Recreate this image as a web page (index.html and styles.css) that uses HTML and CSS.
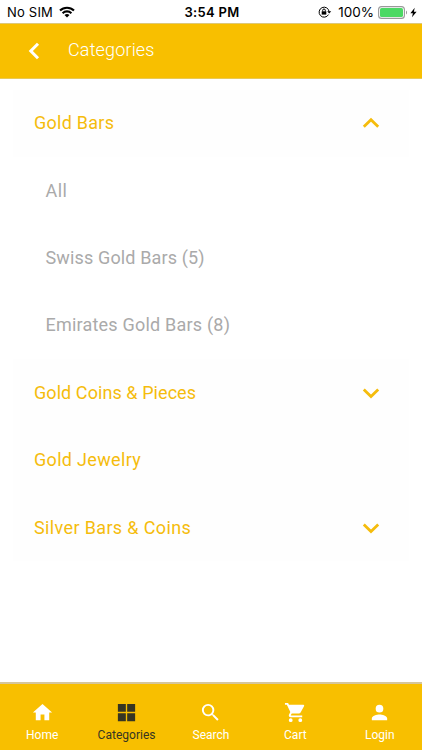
FILE: index.html
```html
<!DOCTYPE html>
<html lang="en">
<head>
<meta charset="utf-8">
<title>Categories</title>
<link rel="stylesheet" href="styles.css">
</head>
<body>
<div class="screen">
  <div class="status">
    <div class="status-left">
      <span class="carrier">No SIM</span>
      <svg class="wifi" width="16" height="12" viewBox="0 0 16 12" fill="none" stroke="#000" stroke-width="2.1"><path d="M1 4.6a10 10 0 0 1 14 0M3.6 7.2a6.3 6.3 0 0 1 8.8 0"/><path d="M8 11.6 5.5 9.1a3.6 3.6 0 0 1 5 0z" fill="#000" stroke="none"/></svg>
    </div>
    <span class="time">3:54 PM</span>
    <div class="status-right">
      <svg class="lock" width="14" height="12" viewBox="0 0 14 12" fill="none" stroke="#000" stroke-width="1"><path d="M10.5 8.6a5 5 0 1 1 .6-2.9"/><path d="M9.2 5.2h4L11.2 7.6z" fill="#000" stroke="none"/><path d="M3.7 5.3h4.6v3.3H3.7z" fill="#000" stroke="none"/><path d="M4.7 5.5V4.3a1.3 1.3 0 0 1 2.6 0v1.2"/></svg>
      <span class="percent">100%</span>
      <svg class="battery" width="30" height="13" viewBox="0 0 30 13"><rect x=".6" y=".6" width="25.8" height="11.8" rx="3" fill="#fff" stroke="#999" stroke-width="1.1"/><rect x="2" y="2" width="23" height="9" rx="1.6" fill="#4cd964"/><path d="M28 4.5c1.4.5 1.4 3.5 0 4z" fill="#999"/></svg>
      <svg class="bolt" width="7" height="11" viewBox="0 0 7 11"><path d="M4.7.7.4 6.2h2.5L2 10.3 6.600 4.700H3.900z"/></svg>
    </div>
  </div>
  <header class="header">
    <svg class="back" width="12" height="18" viewBox="0 0 12 18" fill="none" stroke="#fff" stroke-width="3"><path d="M10 1.700 2.800 9l7.200 7.300"/></svg>
    <h1 class="title">Categories</h1>
  </header>
  <main class="list">
    <div class="row panel"><span class="t-bars">Gold Bars</span><svg class="chevron" width="18" height="12" viewBox="0 0 18 12"><path d="M1.800 9.800 9 2.800l7.200 7"/></svg></div>
    <div class="row sub"><span class="t-all">All</span></div>
    <div class="row sub"><span class="t-swiss">Swiss Gold Bars (5)</span></div>
    <div class="row sub"><span class="t-emirates">Emirates Gold Bars (8)</span></div>
    <div class="row panel"><span class="t-coins">Gold Coins &amp; Pieces</span><svg class="chevron" width="18" height="12" viewBox="0 0 18 12"><path d="M1.800 2.500 9 9.500l7.200-7"/></svg></div>
    <div class="row panel"><span class="t-jewelry">Gold Jewelry</span></div>
    <div class="row panel"><span class="t-silver">Silver Bars &amp; Coins</span><svg class="chevron" width="18" height="12" viewBox="0 0 18 12"><path d="M1.800 2.500 9 9.500l7.200-7"/></svg></div>
  </main>
  <nav class="tabs">
    <div class="tab"><svg viewBox="0 0 24 24"><path d="M10 20v-6h4v6h5v-8h3L12 3 2 12h3v8z"/></svg><span>Home</span></div>
    <div class="tab active"><svg viewBox="0 0 24 24"><path d="M3 3h8.300v8.300H3zM12.700 3H21v8.300h-8.300zM3 12.700h8.300V21H3zM12.700 12.700H21V21h-8.300z"/></svg><span>Categories</span></div>
    <div class="tab"><svg viewBox="0 0 24 24"><path d="M15.500 14h-.790l-.280-.270A6.470 6.470 0 0 0 16 9.500 6.500 6.500 0 1 0 9.500 16c1.610 0 3.090-.590 4.230-1.570l.270.280v.790l5 4.990L20.490 19zm-6 0a4.500 4.500 0 1 1 0-9 4.500 4.500 0 0 1 0 9z"/></svg><span>Search</span></div>
    <div class="tab"><svg viewBox="0 0 24 24"><path d="M7 18a2 2 0 1 0 0 4 2 2 0 0 0 0-4zM1 2v2h2l3.600 7.590-1.350 2.450C4.520 15.370 5.480 17 7 17h12v-2H7.420a.25.25 0 0 1-.250-.250l.030-.120.900-1.630h7.450c.750 0 1.410-.410 1.750-1.030l3.580-6.490A1 1 0 0 0 20 4H5.210l-.940-2zM17 18a2 2 0 1 0 0 4 2 2 0 0 0 0-4z"/></svg><span>Cart</span></div>
    <div class="tab"><svg viewBox="0 0 24 24"><path d="M12 12a4 4 0 1 0 0-8 4 4 0 0 0 0 8zm0 2c-2.670 0-8 1.340-8 4v2h16v-2c0-2.660-5.330-4-8-4z"/></svg><span>Login</span></div>
  </nav>
</div>
</body>
</html>
```
FILE: styles.css
```css
* { box-sizing: border-box; }
body { margin: 0; background: #fff; font-family: Roboto, sans-serif; }
.screen { width: 422px; height: 750px; display: flex; flex-direction: column; overflow: hidden; }
.status { height: 23px; display: grid; grid-template-columns: 1fr auto 1fr; align-items: center; padding: 1px 5px 0 7px; font: 13.5px/22px Inter, sans-serif; color: #000; }
.status-left, .status-right { display: flex; align-items: center; }
.status-right { justify-content: flex-end; }
.carrier { font-size: 13px; letter-spacing: .2px; }
.wifi { margin-left: 6px; }
.time { font-size: 13px; font-weight: 600; letter-spacing: .3px; }
.lock { margin-right: 6px; }
.percent { font-size: 13.5px; margin-right: 4px; }
.bolt { margin-left: 2px; }
.header { height: 56px; display: flex; align-items: center; padding: 0 28px; background: #f8bf00; border-top: 1px solid #ddc878; border-bottom: 1px solid #e9c956; }
.title { margin: -2px 0 0 28px; font-size: 18px; font-weight: 300; line-height: 24px; letter-spacing: .15px; color: #fff; }
.list { flex: 1; padding: 10.5px 13px 0; }
.row { height: 67.4px; display: flex; align-items: center; justify-content: space-between; padding: 0 29px 0 21px; font-size: 18px; line-height: 24px; white-space: nowrap; }
.panel { background: #fefefe; color: #f5bc0c; }
.sub { padding-left: 32.5px; color: #aaa; }
.t-bars { letter-spacing: .26px; }
.t-all { letter-spacing: .5px; }
.t-swiss { letter-spacing: .14px; }
.t-emirates { letter-spacing: .21px; }
.t-coins { letter-spacing: .07px; }
.t-jewelry { letter-spacing: .32px; }
.t-silver { letter-spacing: .36px; }
.chevron { fill: none; stroke: #f5bc0c; stroke-width: 2.8; }
.tabs { height: 68px; display: grid; grid-template-columns: repeat(5, 1fr); background: #f8bf00; border-top: 2px solid #d5c69b; color: #fff; }
.tab { display: flex; flex-direction: column; align-items: center; padding-top: 17px; font-size: 12px; line-height: 14px; letter-spacing: .02px; }
.tab svg { width: 23px; height: 23px; fill: currentColor; margin-bottom: 4px; }
.active { color: #363522; }
```
